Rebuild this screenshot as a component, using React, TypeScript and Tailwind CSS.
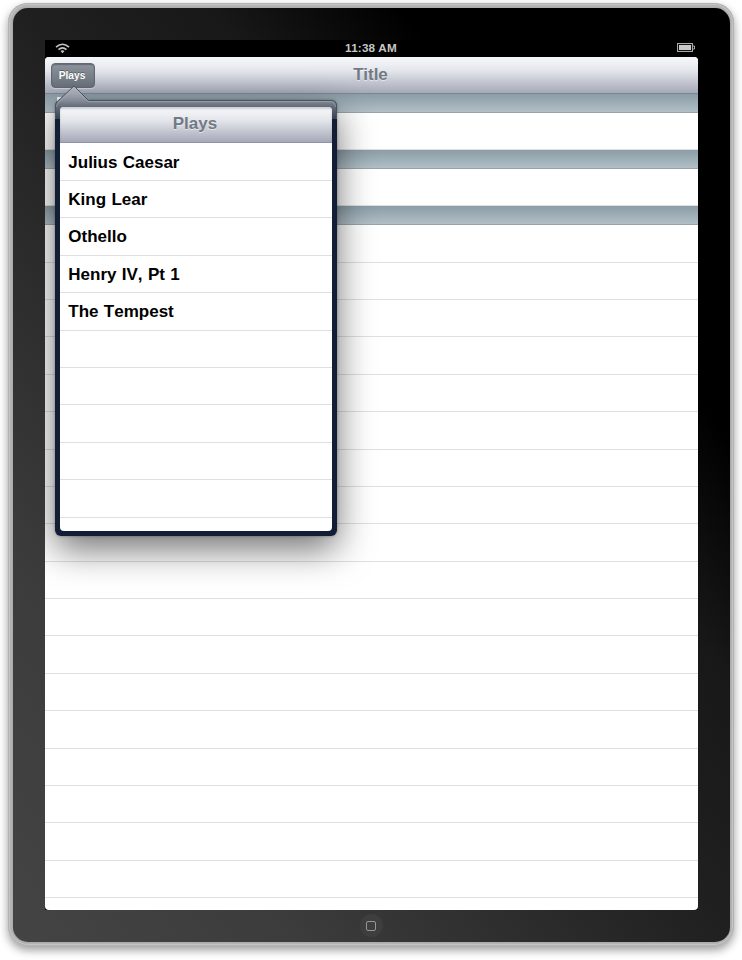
const plays = ['Julius Caesar', 'King Lear', 'Othello', 'Henry IV, Pt 1', 'The Tempest', '', '', '', '', ''];
const barGradient =
  'bg-[linear-gradient(to_bottom,#f6f7fa_0%,#eff0f4_18%,#e2e4ea_40%,#c3c6d0_70%,#a5a9b8_100%)]';

function SectionHeader() {
  return (
    <div className="h-[18.8px] shrink-0 border-b border-[#98a4aa] bg-[linear-gradient(to_bottom,#8b9da7,#b1bfc6)]" />
  );
}

function Row() {
  return <div className="h-[37.4px] shrink-0 border-b border-[#e0e0e0]" />;
}

function StatusBar() {
  return (
    <div className="relative flex h-[17px] shrink-0 items-center justify-between bg-black pr-[3px] pl-[10px]">
      <svg width="15" height="11" viewBox="0 0 15 11" fill="none" stroke="#c4c4c4" strokeWidth="1.6">
        <path d="M1 4.2Q7.5 -1.7 14 4.2" />
        <path d="M3.5 6.6Q7.5 3 11.5 6.6" />
        <path d="M5.5 8L7.5 10.3L9.5 8Q7.5 6.5 5.5 8Z" fill="#c4c4c4" stroke="none" />
      </svg>
      <span className="absolute inset-x-0 top-0 text-center text-[11.7px] leading-[15px] font-bold tracking-[0.2px] text-[#c6c6c6]">
        11:38 AM
      </span>
      <svg className="-translate-y-px" width="18" height="9" viewBox="0 0 18 9">
        <rect x="0.5" y="0.5" width="15" height="8" fill="#111" stroke="#a9a9a9" />
        <rect x="2" y="2" width="12" height="5" fill="#c9c9c9" />
        <path d="M16 3H17.5V6H16" fill="none" stroke="#a9a9a9" />
      </svg>
    </div>
  );
}

function Popover() {
  return (
    <div className="absolute top-[100px] left-[55px] h-[436px] w-[282px] rounded-[6px] bg-[#121d36] p-[5px] pt-[7px] shadow-[0_13px_36px_rgba(0,0,0,0.56),0_0_3px_rgba(0,0,0,0.35)]">
      <svg className="absolute top-[-15px] left-0" width="282" height="34" viewBox="0 0 282 34">
        <defs>
          <linearGradient id="frame" gradientUnits="userSpaceOnUse" x1="0" y1="0" x2="0" y2="34">
            <stop offset="0" stopColor="#b4b7c1" />
            <stop offset="0.25" stopColor="#a0a5b0" />
            <stop offset="0.45" stopColor="#868d99" />
            <stop offset="0.62" stopColor="#666e7b" />
            <stop offset="1" stopColor="#364152" />
          </linearGradient>
        </defs>
        <path d="M0 34V21Q0 18.5 2.5 16.5L19 1L33.5 15H276Q282 15 282 21V34Z" fill="url(#frame)" />
        <path
          d="M0.5 34V21Q0.5 18.5 2.5 16.5L19 1L33.5 15.5H276Q281.5 15.5 281.5 21V34"
          fill="none"
          stroke="#4a525d"
        />
        <path d="M1.5 22Q1.5 19 4 17L19 2.5L33 16.5H276Q280 17 280.5 22" fill="none" stroke="#b4b9c2" strokeOpacity="0.5" strokeWidth="0.9" />
      </svg>
      <div className="relative flex h-full flex-col overflow-hidden rounded-[4px] bg-white">
        <div
          className={`mb-[0.6px] h-[36px] shrink-0 border-b border-[#8e93a5] pr-[2px] text-center text-[17px] leading-[34px] font-bold text-[#717a84] [text-shadow:0_1px_0_rgba(255,255,255,0.5)] ${barGradient} shadow-[inset_0_2px_2px_rgba(80,90,110,0.25)]`}
        >
          Plays
        </div>
        {plays.map((play, i) => (
          <div
            key={i}
            className="h-[37.4px] shrink-0 border-b border-[#e0e0e0] pl-[8.3px] text-[17px] leading-[37.4px] font-bold text-black [font-kerning:none] [word-spacing:0.6px]"
          >
            {play}
          </div>
        ))}
      </div>
    </div>
  );
}

export default function App() {
  return (
    <div className="relative h-[960px] w-[742px] overflow-hidden bg-white font-['Liberation_Sans',Arial,sans-serif]">
      <div className="pt-[3px] pl-[8px]">
        <div className="h-[943px] w-[726px] rounded-[20px] bg-[#b3b3b3] p-[4.5px] shadow-[0_4px_10px_rgba(0,0,0,0.4),inset_0_0_0_1px_#b3b3b3,inset_0_0_0_2px_#c4c4c4]">
          <div className="flex h-full w-full flex-col items-center rounded-[15px] bg-[linear-gradient(to_top_right,#444444_0%,#3c3c3c_20%,#202020_50%,#181818_64%,#000000_77%,#000000_100%)] pt-[32.5px] shadow-[0_0_1px_0_rgba(60,60,60,0.6)]">
            <div className="flex h-[870px] w-[653px] shrink-0 flex-col bg-black">
              <StatusBar />
              <div className="flex min-h-0 flex-1 flex-col overflow-hidden rounded-[4px] bg-white">
                <div className={`relative h-[37px] shrink-0 border-b border-[#7b8894] pt-[6px] pl-[6px] ${barGradient}`}>
                  <div className="h-[25px] w-[44px] rounded-[4px] border border-[#626972] bg-[linear-gradient(to_bottom,#8d939c,#7b828b_50%,#69717a)] pr-px text-center text-[10.2px] leading-[23px] font-bold text-white shadow-[inset_0_1px_1px_rgba(60,65,75,0.5),0_1px_0_rgba(255,255,255,0.35)] [text-shadow:0_-1px_0_rgba(0,0,0,0.3)]">
                    Plays
                  </div>
                  <div className="absolute inset-x-0 top-0 pr-px text-center text-[17px] leading-[36px] font-bold text-[#717a84] [text-shadow:0_1px_0_rgba(255,255,255,0.5)]">
                    Title
                  </div>
                </div>
                <SectionHeader />
                <Row />
                <SectionHeader />
                <Row />
                <SectionHeader />
                {Array.from({ length: 18 }, (_, i) => (
                  <Row key={i} />
                ))}
              </div>
            </div>
            <div className="mt-[4px] flex h-[23px] w-[23px] shrink-0 items-center justify-center rounded-full bg-[#3e3e3e]">
              <div className="h-[10px] w-[10px] rounded-[2px] border border-[#969696]" />
            </div>
          </div>
        </div>
      </div>
      <div className="absolute top-0 left-[44.5px] h-[910px] w-[653px] overflow-hidden">
        <div className="absolute top-[97px] left-[12px] h-[4px] w-[4px] border-t-2 border-l-2 border-[#eef1f3]" />
        <div className="absolute top-0 left-[-44.5px]">
          <Popover />
        </div>
      </div>
    </div>
  );
}
